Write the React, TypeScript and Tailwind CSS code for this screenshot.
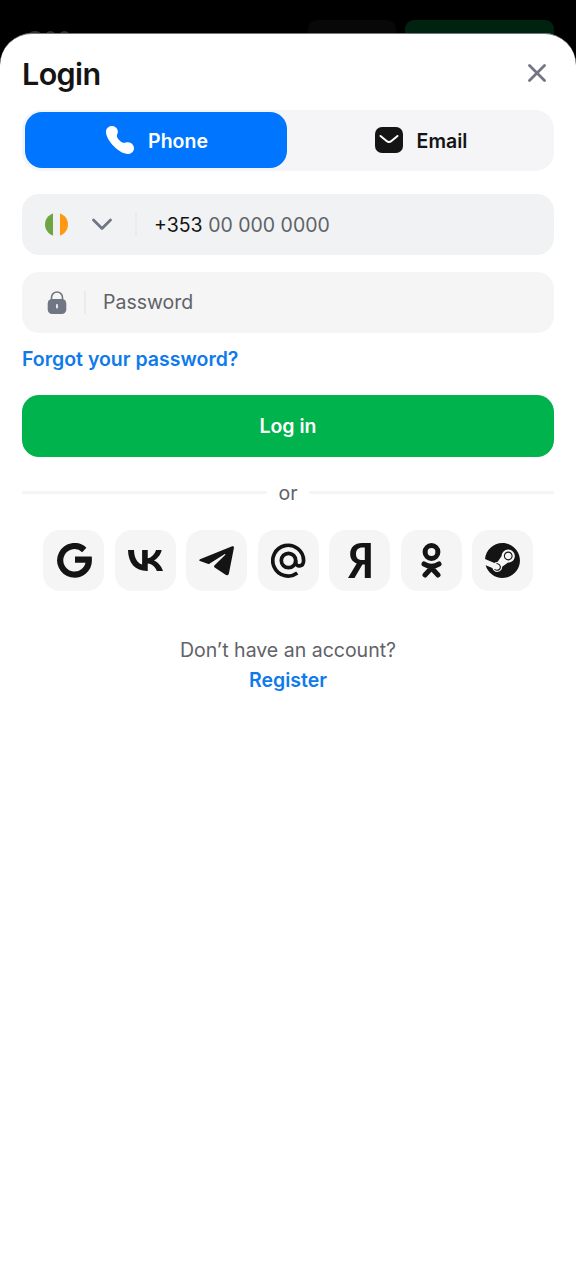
import { SiSteam } from 'react-icons/si';

const socials = [
  {
    name: 'Google',
    icon: (
      <svg className="ml-px" width="35" height="35" viewBox="0 0 35 35" fill="none" stroke="currentColor" strokeWidth="6.2">
        <path d="M27.3 6.9A14.3 14.3 0 1 0 31.8 16.7H18" />
      </svg>
    ),
  },
  {
    name: 'VK',
    icon: (
      <svg width="35" height="21" viewBox="4.05 7.3 16.01 10" preserveAspectRatio="none" fill="currentColor">
        <path d="M6.79 7.3H4.05c.13 6.24 3.25 9.99 8.72 9.99h.31v-3.57c2.01.2 3.53 1.67 4.14 3.57h2.84c-.78-2.84-2.83-4.41-4.11-5.01 1.28-.74 3.08-2.54 3.51-4.98h-2.58c-.56 1.98-2.22 3.78-3.8 3.95V7.3H10.5v6.92c-1.6-.4-3.62-2.34-3.71-6.92Z" />
      </svg>
    ),
  },
  {
    name: 'Telegram',
    icon: (
      <svg width="35" height="30" viewBox="0 0 35 30" fill="currentColor">
        <path d="M33.2.3 1 13.2C0 13.7 0 14.6 1 15l7.6 2.8c.8.3 1.5.1 2.200-.4L25.400 8.200c.8-.5 1.300.2.7.8L15.600 19.300c-.8.8-.7 1.600.1 2.200l10.900 7.300c1.400.9 3 .4 3.300-1.400L34.900 2C35.100.6 34.300-.1 33.200.3Z" />
      </svg>
    ),
  },
  {
    name: 'Mail.ru',
    icon: (
      <svg width="35" height="35" viewBox="0 0 35 35" fill="none" stroke="currentColor" strokeWidth="3.7">
        <circle cx="17.5" cy="17.5" r="7.2" />
        <path d="M24.7 17.5v1.800c0 5 7.900 5 7.900-1.800A15.400 15.400 0 1 0 26.300 30.100" />
      </svg>
    ),
  },
  {
    name: 'Yandex',
    icon: (
      <svg width="24" height="35" viewBox="0 0 24 35" fill="currentColor">
        <path
          fillRule="evenodd"
          d="M22.8 0v35h-6V21.500h-2.400L6.500 35H0l8.700-14.600C4.400 18.700 2.200 15.600 2.200 11 2.200 4.200 6.700 0 14 0Zm-6 4.600h-2.400C10.400 4.600 8 7 8 10.900c0 4.100 2.300 6.200 6.600 6.200h2.200Z"
        />
      </svg>
    ),
  },
  {
    name: 'Odnoklassniki',
    icon: (
      <svg width="21" height="35" viewBox="0 0 21 35" fill="none" stroke="currentColor" strokeWidth="5" strokeLinecap="round">
        <circle cx="10.5" cy="9" r="6.4" />
        <path strokeLinejoin="round" d="M3 21q7.500 4.500 15 0M4 32l6.500-7 6.500 7" />
      </svg>
    ),
  },
  { name: 'Steam', icon: <SiSteam size={35} /> },
];

function PhoneIcon() {
  return (
    <svg width="28" height="28" viewBox="0 0 28 28" fill="currentColor">
      <path d="M5.800 0C2.600 0 0 2.500 0 5.800 0 14.500 13.200 28 22 28c3.300 0 6-2.800 6-5.800 0-3.200-2.800-6-6-6-1.800 0-3.200 1-4.700.6-2.500-.8-5.600-3.900-6.400-6.400-.4-1.500 1-2.800 1-4.600C11.900 2.600 9.200 0 5.800 0Z" />
    </svg>
  );
}

function MailIcon() {
  return (
    <svg width="28" height="26" viewBox="0 0 28 26" fill="none">
      <rect width="28" height="26" rx="7" fill="#141414" />
      <path d="m5.500 9 6.100 5c1.500 1.300 3.300 1.300 4.800 0L22.500 9" stroke="#fff" strokeWidth="2" strokeLinecap="round" />
    </svg>
  );
}

function IrelandFlag() {
  return (
    <span className="mb-px flex h-[23px] w-[23px] overflow-hidden rounded-full">
      <span className="w-[8px] bg-[#6da544]" />
      <span className="w-[7px] bg-[#f0f0f0]" />
      <span className="w-[8px] bg-[#ff9811]" />
    </span>
  );
}

function LockIcon() {
  return (
    <svg className="mb-px" width="20" height="23" viewBox="0 0 20 23" fill="none">
      <path d="M4.500 9V6.500a5.500 5.500 0 0 1 11 0V9" stroke="#717684" strokeWidth="1.6" />
      <rect x=".7" y="8" width="18.600" height="15" rx="4.500" fill="#717684" />
      <rect x="9.100" y="13" width="1.800" height="4.500" rx=".9" fill="#f5f5f5" />
    </svg>
  );
}

export default function App() {
  return (
    <div className="relative h-[1280px] w-[576px] overflow-hidden bg-black font-['Inter',sans-serif] text-[19.5px] leading-[30px] text-[#141414]">
      {/* dimmed page header behind the sheet */}
      <div className="absolute inset-x-0 top-0 flex h-[60px] items-start justify-end gap-[9px] pt-[20px] pr-[22px]">
        <div className="mt-[11px] mr-auto ml-[28px] flex gap-[3px]">
          <span className="h-3 w-[14px] rounded-full bg-[#303030]" />
          <span className="h-3 w-[11px] rounded-full bg-[#303030]" />
          <span className="h-3 w-[11px] rounded-full bg-[#303030]" />
        </div>
        <span className="h-10 w-[88px] rounded-[9px] bg-[#080808]" />
        <span className="h-10 w-[149px] rounded-[9px] bg-[#00230f]" />
      </div>

      <div className="relative mt-[33px] h-[1247px] rounded-t-[32px] border-t border-[#777] bg-white px-[22px]">
        <div className="flex h-[76px] items-center justify-between pt-[4px]">
          <h1 className="text-[30.5px] font-semibold tracking-[-0.6px]">Login</h1>
          <button type="button" aria-label="Close" className="mr-[8px] mb-[3px] text-[#717684]">
            <svg width="18" height="18" viewBox="0 0 18 18" stroke="currentColor" strokeWidth="2.8" strokeLinecap="round">
              <path d="m1.500 1.500 15 15M16.500 1.500l-15 15" />
            </svg>
          </button>
        </div>

        <div className="flex h-[61px] rounded-[19px] bg-[#f5f5f8] px-[3px] py-[2px] font-semibold">
          <button type="button" className="flex h-[56px] w-[262px] items-center justify-center gap-[14px] rounded-[17px] bg-[#0075ff] pl-[2px] text-white">
            <PhoneIcon />
            <span className="pt-[2px]">Phone</span>
          </button>
          <button type="button" className="flex h-[56px] flex-1 items-center justify-center gap-[14px] pl-[4px]">
            <MailIcon />
            <span className="pt-[2px]">Email</span>
          </button>
        </div>

        <div className="mt-[23px] flex h-[61px] items-center rounded-[17px] bg-[#f0f2f4] pl-[23px]">
          <IrelandFlag />
          <svg className="mb-px ml-[23px]" width="22" height="13" viewBox="0 0 22 13" fill="none" stroke="#717684" strokeWidth="2.8" strokeLinecap="round" strokeLinejoin="round">
            <path d="m2.500 2 8.500 8.500L19.500 2" />
          </svg>
          <span className="ml-[22px] h-[23px] w-[2px] bg-[#e9ebed]" />
          <span className="ml-[17px]">
            +353 <span className="text-[#5f6268]">00 000 0000</span>
          </span>
        </div>

        <div className="mt-[17px] flex h-[61px] items-center rounded-[17px] bg-[#f5f5f5] pl-[25px]">
          <LockIcon />
          <span className="ml-[17px] h-[23px] w-[2px] bg-[#ebebec]" />
          <span className="ml-[17px] pb-px text-[#5f6268]">Password</span>
        </div>

        <a className="mt-[11px] block font-semibold text-[#0f7aeb]">Forgot your password?</a>

        <button type="button" className="mt-[21px] h-[62px] w-full rounded-[17px] bg-[#00b34c] font-semibold text-white">
          Log in
        </button>

        <div className="mt-[21px] flex items-center gap-[11px] text-[#5f6268]">
          <span className="mb-px h-[3px] flex-1 bg-[#f5f5f5]" />
          or
          <span className="mb-px h-[3px] flex-1 bg-[#f5f5f5]" />
        </div>

        <div className="mt-[22px] flex justify-between pr-[21px] pl-[21px]">
          {socials.map((social) => (
            <button
              key={social.name}
              type="button"
              aria-label={social.name}
              className="flex h-[61px] w-[61px] items-center justify-center rounded-[17px] bg-[#f5f5f5]"
            >
              {social.icon}
            </button>
          ))}
        </div>

        <div className="mt-[44px] text-center text-[#5f6268]">
          <p>Don’t have an account?</p>
          <a className="font-semibold text-[#0f7aeb]">Register</a>
        </div>
      </div>
    </div>
  );
}
